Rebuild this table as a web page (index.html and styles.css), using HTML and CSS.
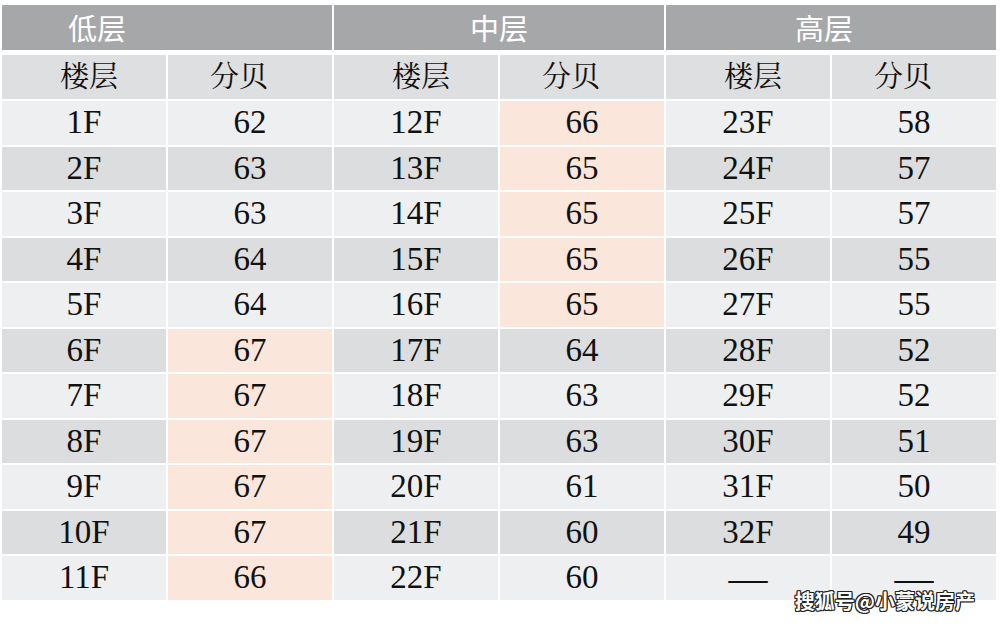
FILE: index.html
```html
<!DOCTYPE html>
<html lang="zh-CN">
<head>
<meta charset="utf-8">
<title>楼层分贝</title>
<link rel="stylesheet" href="styles.css">
</head>
<body>
<div class="page">
  <div class="groups">
    <div class="group group-left">低层</div>
    <div class="group">中层</div>
    <div class="group group-right">高层</div>
  </div>
  <div class="table" id="table">
    <div class="cell head head-floor">楼层</div><div class="cell head head-db">分贝</div>
    <div class="cell head head-floor">楼层</div><div class="cell head head-db">分贝</div>
    <div class="cell head head-floor">楼层</div><div class="cell head head-db">分贝</div>

    <div class="cell light">1F</div><div class="cell light">62</div>
    <div class="cell light">12F</div><div class="cell hl">66</div>
    <div class="cell light">23F</div><div class="cell light">58</div>

    <div class="cell dark">2F</div><div class="cell dark">63</div>
    <div class="cell dark">13F</div><div class="cell hl">65</div>
    <div class="cell dark">24F</div><div class="cell dark">57</div>

    <div class="cell light">3F</div><div class="cell light">63</div>
    <div class="cell light">14F</div><div class="cell hl">65</div>
    <div class="cell light">25F</div><div class="cell light">57</div>

    <div class="cell dark">4F</div><div class="cell dark">64</div>
    <div class="cell dark">15F</div><div class="cell hl">65</div>
    <div class="cell dark">26F</div><div class="cell dark">55</div>

    <div class="cell light">5F</div><div class="cell light">64</div>
    <div class="cell light">16F</div><div class="cell hl">65</div>
    <div class="cell light">27F</div><div class="cell light">55</div>

    <div class="cell dark">6F</div><div class="cell hl">67</div>
    <div class="cell dark">17F</div><div class="cell dark">64</div>
    <div class="cell dark">28F</div><div class="cell dark">52</div>

    <div class="cell light">7F</div><div class="cell hl">67</div>
    <div class="cell light">18F</div><div class="cell light">63</div>
    <div class="cell light">29F</div><div class="cell light">52</div>

    <div class="cell dark">8F</div><div class="cell hl">67</div>
    <div class="cell dark">19F</div><div class="cell dark">63</div>
    <div class="cell dark">30F</div><div class="cell dark">51</div>

    <div class="cell light">9F</div><div class="cell hl">67</div>
    <div class="cell light">20F</div><div class="cell light">61</div>
    <div class="cell light">31F</div><div class="cell light">50</div>

    <div class="cell dark">10F</div><div class="cell hl">67</div>
    <div class="cell dark">21F</div><div class="cell dark">60</div>
    <div class="cell dark">32F</div><div class="cell dark">49</div>

    <div class="cell light">11F</div><div class="cell hl">66</div>
    <div class="cell light">22F</div><div class="cell light">60</div>
    <div class="cell light dash">—</div><div class="cell light dash">—</div>
  </div>
  <div class="watermark">搜狐号@小蒙说房产</div>
</div>
</body>
</html>
```

FILE: styles.css
```css
html, body {
  margin: 0;
  padding: 0;
  background: #ffffff;
}

.page {
  position: relative;
  width: 1000px;
  height: 624px;
  padding: 5px 0 0 2px;
  box-sizing: border-box;
  font-family: "Liberation Serif", "Noto Serif CJK SC", "Noto Sans CJK SC", serif;
  color: #111111;
}

.groups {
  display: grid;
  grid-template-columns: 330px 330px 330px;
  column-gap: 2px;
  width: 994px;
  margin-bottom: 5px;
}

.group {
  height: 45px;
  background: #a6a7a9;
  color: #ffffff;
  font-family: "Noto Sans CJK SC", sans-serif;
  font-size: 29px;
  line-height: 45px;
  text-align: center;
}

.group-left {
  text-align: left;
  padding-left: 66px;
}

.group-right {
  padding-right: 14px;
}

.table {
  display: grid;
  grid-template-columns: repeat(6, 164px);
  grid-template-rows: 44px repeat(11, 43.5px);
  gap: 2px;
  width: 994px;
}

.cell {
  display: flex;
  align-items: center;
  justify-content: center;
  font-size: 33px;
  line-height: 1;
}

.head {
  background: #dedfe1;
  font-size: 29px;
  padding-top: 1px;
}

.head-floor {
  padding-left: 10px;
}

.head-db {
  padding-right: 22px;
}

.light {
  background: #eeeff1;
}

.dark {
  background: #dcdddf;
}

.hl {
  background: #fae6da;
}

.dash {
  font-size: 39px;
}

.watermark {
  position: absolute;
  right: 25px;
  top: 589px;
  font-family: "Noto Sans CJK SC", sans-serif;
  font-size: 20px;
  font-weight: 700;
  line-height: 24px;
  color: #ffffff;
  letter-spacing: 0;
  text-shadow:
    -1px -1px 0 #222, 1px -1px 0 #222, -1px 1px 0 #222, 1px 1px 0 #222,
    0 -1px 0 #222, 0 1px 0 #222, -1px 0 0 #222, 1px 0 0 #222;
}
```
